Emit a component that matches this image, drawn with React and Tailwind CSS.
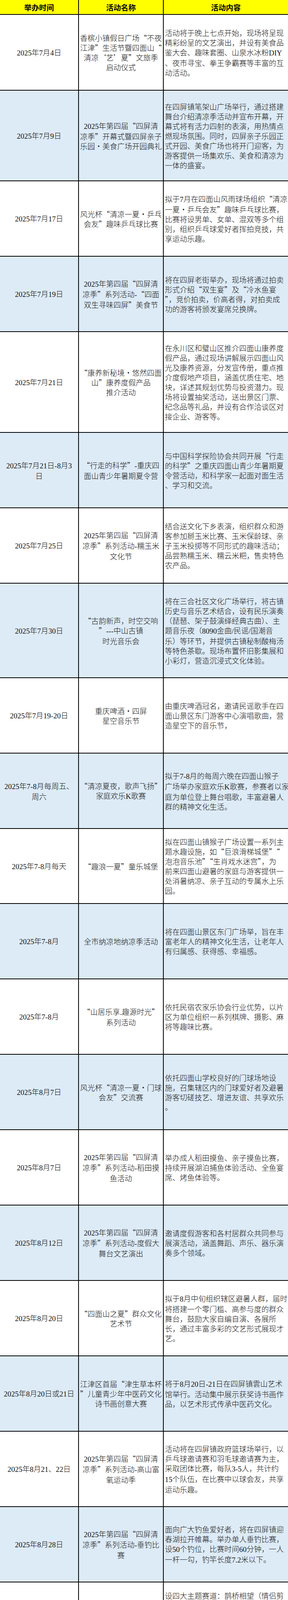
const ROWS = [
  {
    h: 'h-[194px]',
    date: ['2025年7月4日'],
    name: ['香槟小镇假日广场“不夜', '江津”生活节暨四面山“', '清凉‘艺’夏”文旅季', '启动仪式'],
    content: [
      '活动将于晚上七点开始，现场将呈现',
      '精彩纷呈的文艺演出，并设有美食品',
      '鉴大会、趣味套圈、山泉水冰粉DIY',
      '、夜市寻宝、拳王争霸赛等丰富的互',
      '动活动。',
    ],
  },
  {
    h: 'h-[232px]',
    date: ['2025年7月9日'],
    name: ['2025年第四届“四屏清', '凉季”开幕式暨四屏亲子', '乐园·美食广场开园典礼'],
    content: [
      '在四屏镇笔架山广场举行，通过搭建',
      '舞台介绍清凉季活动并宣布开幕，开',
      '幕式将有活力四射的表演，用热情点',
      '燃现场氛围。同时，四屏亲子乐园正',
      '式开园、美食广场也将开门迎客，为',
      '游客提供一场集欢乐、美食和清凉为',
      '一体的盛宴。',
    ],
  },
  {
    h: 'h-[193px]',
    date: ['2025年7月17日'],
    name: ['风光杯“清凉一夏·乒乓', '会友”趣味乒乓球比赛'],
    content: [
      '拟于7月在四面山风雨球场组织“清凉',
      '一夏·乒乓会友”趣味乒乓球比赛，',
      '比赛将设男单、女单、混双等多个组',
      '别，组织乒乓球爱好者挥拍竞技，共',
      '享运动乐趣。',
    ],
  },
  {
    h: 'h-[193px]',
    date: ['2025年7月19日'],
    name: ['2025年第四届“四屏清', '凉季”系列活动-“四面', '双生寻味四屏”美食节'],
    content: [
      '将在四屏老街举办，现场将通过拍卖',
      '形式介绍“双生宴”及“冷水鱼宴',
      '”，竞价拍卖，价高者得，对拍卖成',
      '功的游客将颁发宴席兑换牌。',
    ],
  },
  {
    h: 'h-[258px]',
    date: ['2025年7月21日'],
    name: ['“康养新秘境·悠然四面', '山”康养度假产品', '推介活动'],
    content: [
      '在永川区和璧山区推介四面山康养度',
      '假产品，通过现场讲解展示四面山风',
      '光及康养资源，分发宣传册，重点推',
      '介度假地产项目，涵盖优质住宅、地',
      '块，详述其规划优势与投资潜力。现',
      '场将设置抽奖活动，送出景区门票、',
      '纪念品等礼品，并设有合作洽谈区对',
      '接企业、游客等。',
    ],
  },
  {
    h: 'h-[193px]',
    date: ['2025年7月21日-8月3', '日'],
    name: ['“行走的科学”-重庆四', '面山青少年暑期夏令营'],
    content: [
      '与中国科学探险协会共同开展“行走',
      '的科学”之重庆四面山青少年暑期夏',
      '令营活动，和科学家一起面对面生活',
      '、学习和交流。',
    ],
  },
  {
    h: 'h-[193px]',
    date: ['2025年7月25日'],
    name: ['2025年第四届“四屏清', '凉季”系列活动-糯玉米', '文化节'],
    content: [
      '结合送文化下乡表演，组织群众和游',
      '客参加掰玉米比赛、玉米保龄球、亲',
      '子玉米投掷等不同形式的趣味活动；',
      '品尝熟糯玉米、糯云米粑，售卖特色',
      '农产品。',
    ],
  },
  {
    h: 'h-[242px]',
    date: ['2025年7月30日'],
    name: ['“古韵新声，时空交响', '”---中山古镇', '时光音乐会'],
    content: [
      '将在三合社区文化广场举行，将古镇',
      '历史与音乐艺术结合，设有民乐演奏',
      '（琵琶、架子鼓演绎经典古曲）、主',
      '题音乐夜（8090金曲/民谣/国潮音',
      '乐）等环节，并提供古镇秘制酸梅汤',
      '等特色茶歇。现场布置怀旧影集展和',
      '小彩灯，营造沉浸式文化体验。',
    ],
  },
  {
    h: 'h-[193px]',
    date: ['2025年7月19-20日'],
    name: ['重庆啤酒·四屏', '星空音乐节'],
    content: [
      '由重庆啤酒冠名，邀请民谣歌手在四',
      '面山景区东门游客中心演唱歌曲，营',
      '造星空下的音乐节，',
    ],
  },
  {
    h: 'h-[193px]',
    date: ['2025年7-8月每周五、', '周六'],
    name: ['“清凉夏夜，歌声飞扬”', '家庭欢乐K歌赛'],
    content: [
      '拟于7-8月的每周六晚在四面山猴子',
      '广场举办家庭欢乐K歌赛，参赛者以家',
      '庭为单位登上舞台唱歌，丰富避暑人',
      '群的精神文化生活。',
    ],
  },
  {
    h: 'h-[192px]',
    date: ['2025年7-8月每天'],
    name: ['“趣浪一夏”童乐城堡'],
    content: [
      '拟在四面山镇猴子广场设置一系列主',
      '题水趣设施，如“巨浪滑梯城堡”“',
      '泡泡音乐池”“生肖戏水迷宫”，为',
      '前来四面山避暑的家庭与游客提供一',
      '处消暑纳凉、亲子互动的专属水上乐',
      '园。',
    ],
  },
  {
    h: 'h-[193px]',
    date: ['2025年7-8月'],
    name: ['全市纳凉地纳凉季活动'],
    content: [
      '将在四面山景区东门广场举，旨在丰',
      '富老年人的精神文化生活，让老年人',
      '有归属感、获得感、幸福感。',
    ],
  },
  {
    h: 'h-[193px]',
    date: ['2025年7-8月'],
    name: ['“山居乐享.趣源时光”', '系列活动'],
    content: [
      '依托民宿农家乐协会行业优势，以片',
      '区为单位组织一系列棋牌、摄影、麻',
      '将等趣味比赛。',
    ],
  },
  {
    h: 'h-[193px]',
    date: ['2025年8月7日'],
    name: ['风光杯“清凉一夏·门球', '会友”交流赛'],
    content: [
      '依托四面山学校良好的门球场地设',
      '施，召集辖区内的门球爱好者及避暑',
      '游客切磋技艺、增进友谊、共享欢乐',
      '。',
    ],
  },
  {
    h: 'h-[193px]',
    date: ['2025年8月7日'],
    name: ['2025年第四届“四屏清', '凉季”系列活动-稻田摸', '鱼活动'],
    content: [
      '举办成人稻田摸鱼、亲子摸鱼比赛，',
      '持续开展湖泊捕鱼体验活动、全鱼宴',
      '席、烤鱼体验等。',
    ],
  },
  {
    h: 'h-[193px]',
    date: ['2025年8月12日'],
    name: ['2025年第四届“四屏清', '凉季”系列活动-度假大', '舞台文艺演出'],
    content: [
      '邀请度假游客和各村居群众共同参与',
      '展演活动，涵盖舞蹈、声乐、器乐演',
      '奏多个领域。',
    ],
  },
  {
    h: 'h-[193px]',
    date: ['2025年8月20日'],
    name: ['“四面山之夏”群众文化', '艺术节'],
    content: [
      '拟于8月中旬组织辖区避暑人群，届时',
      '将搭建一个零门槛、高参与度的群众',
      '舞台，鼓励大家自编自演、各展所',
      '长，通过丰富多彩的文艺形式展现才',
      '艺。',
    ],
  },
  {
    h: 'h-[193px]',
    date: ['2025年8月20日或21日'],
    name: ['江津区首届“津生草本杯', '”儿童青少年中医药文化', '诗书画创意大赛'],
    content: [
      '将于8月20日-21日在四屏镇雲山艺术',
      '馆举行。活动集中展示获奖诗书画作',
      '品，以艺术形式传承中医药文化。',
    ],
  },
  {
    h: 'h-[193px]',
    date: ['2025年8月21、22日'],
    name: ['2025年第四届“四屏清', '凉季”系列活动-高山富', '氧运动季'],
    content: [
      '活动将在四屏镇政府篮球场举行，以',
      '乒乓球邀请赛和羽毛球邀请赛为主，',
      '采取团体比赛，每队3-5人，共计约',
      '15个队伍，在比赛中以球会友，共享',
      '运动乐趣。',
    ],
  },
  {
    h: 'h-[193px]',
    date: ['2025年8月28日'],
    name: ['2025年第四届“四屏清', '凉季”系列活动-垂钓比', '赛'],
    content: [
      '面向广大钓鱼爱好者，将在四屏镇迎',
      '春湖拉开帷幕。举办单人垂钓比赛，',
      '设50个钓位，比赛时间60分钟，一人',
      '一杆一勾，钓竿长度7.2米以下。',
    ],
  },
  {
    h: 'h-[193px]',
    date: ['2025年8月29日'],
    name: ['“寻迹古镇，定格时光”', '七夕主题线上摄影大赛'],
    content: [
      '设四大主题赛道：鹊桥相望（情侣剪',
      '影）；时光情书（今昔对比照）烟',
      '火；手作（非遗技艺）；秘境探索',
      '（古镇角落）。获奖者获文创礼包，',
      '优秀作品将制成”古镇文化地图”并用',
      '于官方宣传。',
    ],
  },
  {
    h: 'h-[193px]',
    date: ['2025年8月30日'],
    name: ['中医协会肩颈腰腿研讨会'],
    content: [
      '联系江津区中医协会举办颈肩腰腿痛',
      '针刀沙龙研讨会，让避暑人群、游客',
      '掌握更多的养生防病知识。',
    ],
  },
  {
    h: 'h-[193px]',
    date: ['2025年8月底'],
    name: ['“羽”你争锋，“篮”动', '四面山——2025四面山', '运动冠军赛'],
    content: [
      '赛事特邀柏林镇、四面山镇、四屏镇',
      '各派两支队伍参赛。比赛将于四屏镇',
      '政府后篮球场、羽毛球场举办，展现',
      '四面山片区运动健儿的拼搏风采。',
    ],
  },
  {
    h: 'h-[193px]',
    date: ['2025年9月26日'],
    name: ['我们的节日-2025年四屏', '镇中秋节打糍粑文化活动'],
    content: [
      '为营造中秋节节日气氛，特举办打糍',
      '粑活动，传承民俗文化，共建示范院',
      '落，同创和美乡村。',
    ],
  },
  {
    h: 'h-[193px]',
    date: ['2025年9月29日'],
    name: ['“青砖为席月为灯，古镇', '露营话相逢”星空观影', '中秋主题活动'],
    content: [
      '拟于三合社区文化广场举办，以星空',
      '露营为载体，融合中秋传统习俗与创',
      '新文化体验，活动内容包括中秋飞花',
      '令、摆龙门阵·古镇奇谈、露天电影',
      '放送等。',
    ],
  },
  {
    h: 'h-[282px]',
    date: ['2025年10月15日'],
    name: ['“欢乐农耕·活力乡村”', '中山首届丰收嘉年华乡村', '趣味运动会'],
    content: [
      '拟于10月15日在三合社区文化广场举',
      '办“欢乐农耕·活力乡村”中山首届',
      '丰收嘉年华乡村趣味运动会，包括挑',
      '粮接力赛、拔河对抗赛、丰收大搬运',
      '、玉米投掷赛、吃瓜比赛等，穿插民',
      '歌表演、农产品市集，强化丰收氛围',
      '。展现乡村劳动智慧，增强村民凝聚',
      '力，激发拼搏进取精神。同时吸引游',
      '客参与，打造独具特色的地域乡村文',
      '化品牌。',
    ],
  },
  {
    h: 'h-[193px]',
    date: ['2025年10月1日-7日'],
    name: ['康养静修季', '森呼吸·慢生活'],
    content: [
      '拟通过小红书、抖音策划线上话题+直',
      '播，线下开展游园互动小活动，赠送',
      '景区酒店食宿代金券，享受国庆“七',
      '天乐”。',
    ],
  },
  {
    h: 'h-[193px]',
    date: ['2025年11月27日'],
    name: ['中山古镇', '富硒美食烹饪大赛活动'],
    content: [
      '拟在古镇老街举办，拟邀请专业厨师',
      '现场制作江津地标菜，展示江津美食',
      '制作全过程，竞赛规则是主办方制定',
      '三道菜，游客现场品尝投票，得票最',
      '多的前三名获奖，最终也评选出千米',
      '长宴指定菜品对外推介。',
    ],
  },
  {
    h: 'h-[193px]',
    date: ['2025年12月1日-30日'],
    name: ['暖冬奇遇季-冰雪童话'],
    content: [
      '拟在土地岩景区打造人造冰雪乐园，',
      '线上抖音、小红书推出“四面山今天',
      '下雪了吗”热点话题造势。配套推出',
      '“汤泉+空中走廊+围炉煮茶”联票，',
      '打开冬季旅游市场。',
    ],
  },
  {
    h: 'h-[193px]',
    date: ['2026年2月10日'],
    name: ['第二十一届中山古镇', '千米长宴民俗文化节'],
    content: [
      '拟于12月份策划第二十一届中山古镇',
      '千米长宴民俗文化节，围绕祈福，长',
      '宴，非遗等传统习俗开展年俗活动。',
    ],
  },
  {
    h: 'h-[191px]',
    last: true,
    date: ['2026年2月10日'],
    name: ['四屏镇2026年“舞龙舞', '狮.元宵炸年”民俗活动'],
    content: [
      '2026 年元宵节，四屏镇将再次上演',
      '热闹非凡的 “舞龙舞狮·元宵炸年',
      '” 民俗活动，活动内容包括舞龙表演',
      '、划花船、烧龙环节，传承古老文',
      '化，为居民和游客带来一场极具特色',
      '的民俗盛宴。',
    ],
  },
]

// latin/digit runs get a serif face (half-width like the original 宋体 digits)
function Line({ text }) {
  const parts = text.split(/([0-9A-Za-z.\-/+]+)/)
  return (
    <div className="whitespace-pre">
      {parts.map((p, i) =>
        /^[0-9A-Za-z.\-/+]+$/.test(p) ? (
          <span key={i} className="font-['Liberation_Serif',serif]">
            {p}
          </span>
        ) : (
          p
        )
      )}
    </div>
  )
}

function Lines({ lines }) {
  return (
    <div>
      {lines.map((line, i) => (
        <Line key={i} text={line} />
      ))}
    </div>
  )
}

export default function App() {
  return (
    <div className="w-[737px] h-[6261px] overflow-hidden bg-white text-[#111] font-['Noto_Sans_CJK_SC',sans-serif] font-light text-[19px] leading-[25px]">
      {/* Header */}
      <div className="flex h-[38px] border-b-2 border-black bg-[#ffff00] font-bold text-black">
        <div className="w-[202px] shrink-0 border-r-2 border-black flex items-center justify-center">举办时间</div>
        <div className="w-[217px] shrink-0 border-r-2 border-black flex items-center justify-center">活动名称</div>
        <div className="flex-1 flex items-center justify-center">活动内容</div>
      </div>

      {ROWS.map((row, i) => (
        <div
          key={i}
          className={`flex ${row.last ? '' : 'border-b-2 border-black'} ${row.h} ${i % 2 === 1 ? 'bg-[#ddebf7]' : 'bg-white'}`}
        >
          <div className="w-[202px] shrink-0 border-r-2 border-black flex items-center justify-center text-center">
            <Lines lines={row.date} />
          </div>
          <div className="w-[217px] shrink-0 border-r-2 border-black flex items-center justify-center text-center">
            <Lines lines={row.name} />
          </div>
          <div className="flex-1 min-w-0 flex items-center pl-[3px]">
            <Lines lines={row.content} />
          </div>
        </div>
      ))}
    </div>
  )
}
